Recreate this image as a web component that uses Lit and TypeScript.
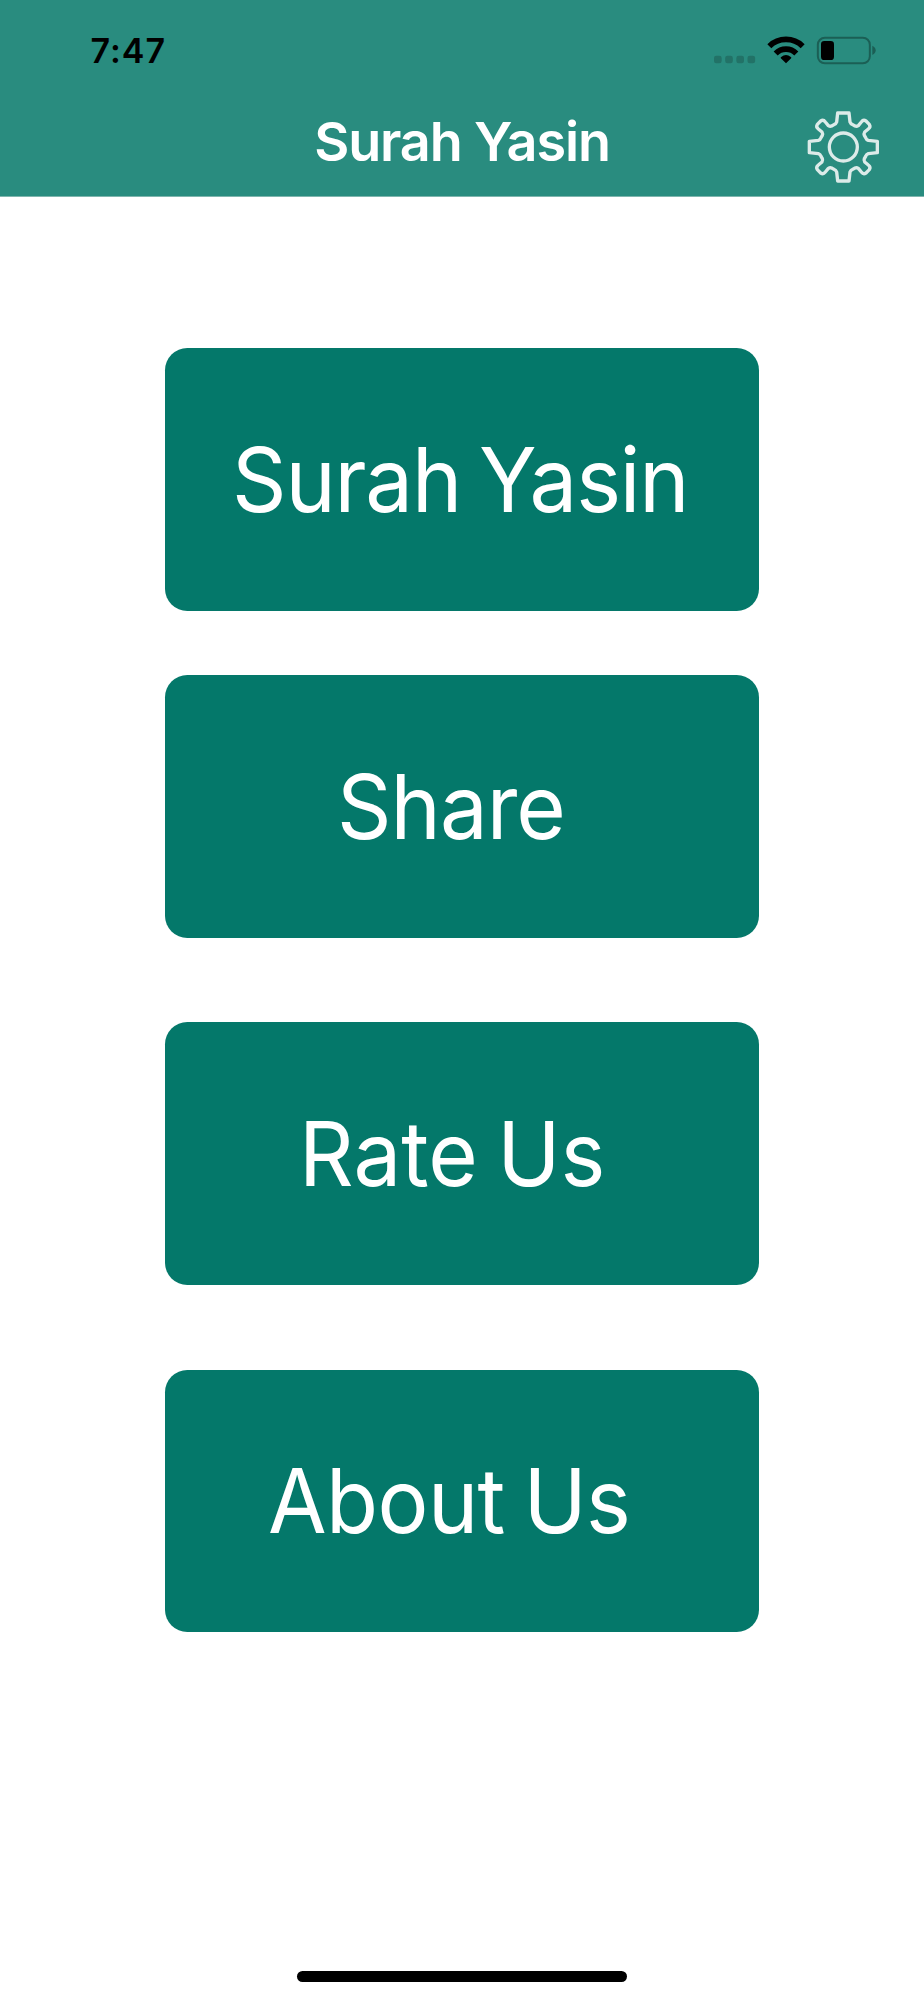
import { LitElement, html, css } from "lit";
import { customElement, property } from "lit/decorators.js";

@customElement("status-bar")
class StatusBar extends LitElement {
  static styles = css`
    :host {
      display: flex;
      justify-content: space-between;
      align-items: center;
      height: 100px;
      box-sizing: border-box;
      padding: 0 24px 0 90.500px;
    }
    .time {
      padding-top: 2px;
      font-size: 34px;
      font-weight: 580;
      line-height: 40px;
      letter-spacing: 1px;
      color: #000;
    }
    .icons {
      display: block;
      width: 200px;
      height: 60px;
    }
  `;

  render() {
    return html`
      <span class="time">7:47</span>
      <svg class="icons" viewBox="0 0 600 180">
        <g fill="#227267">
          <rect x="42" y="107" width="23" height="23" rx="7" />
          <rect x="75.5" y="107" width="23" height="23" rx="7" />
          <rect x="109" y="107" width="23" height="23" rx="7" />
          <rect x="142.5" y="107" width="23" height="23" rx="7" />
        </g>
        <g fill="none" stroke="#000">
          <path d="M208 78.5A71.5 71.5 0 0 1 308 78.5" stroke-width="17" />
          <path d="M227 100.5A43.5 43.5 0 0 1 289 100.5" stroke-width="17" />
        </g>
        <path d="M258 130L242.500 114.500Q241 112 243.500 110.700A24 24 0 0 1 272.500 110.700Q275 112 273.500 114.500Z" fill="#000" />
        <rect x="353.500" y="53" width="156" height="77" rx="21" fill="none" stroke="#1b5f55" stroke-width="6" />
        <path d="M517 77Q527 82 527 91Q527 100 517 105Z" fill="#1b5f55" />
        <rect x="363" y="63" width="39" height="57" rx="10" fill="#000" />
      </svg>
    `;
  }
}

@customElement("nav-bar")
class NavBar extends LitElement {
  static styles = css`
    :host {
      display: grid;
      grid-template-columns: 124px 1fr 124px;
      height: 96px;
    }
    .heading {
      grid-column: 2;
    }
    .title {
      margin: 0;
      padding-top: 9px;
      text-align: center;
      font-size: 54px;
      font-weight: 560;
      line-height: 65px;
      letter-spacing: -1.15px;
      color: #fff;
    }
    .settings {
      grid-column: 3;
      justify-self: end;
      width: 74px;
      height: 74px;
      margin: 10px 44px 0 0;
      padding: 0;
      border: 0;
      background: none;
    }
    .gear {
      display: block;
      width: 74px;
      height: 74px;
    }
  `;

  render() {
    // One tooth-and-valley quarter, turned about the centre four times.
    const points = [0, 90, 180, 270]
      .map((a) => {
        const c = Math.round(Math.cos((a * Math.PI) / 180));
        const s = Math.round(Math.sin((a * Math.PI) / 180));
        const p = (x: number, y: number) => `${x * c - y * s} ${x * s + y * c}`;
        return `${a === 0 ? "M" : "L"}${p(-17, -102)}L${p(17, -102)}L${p(20, -75)}Q${p(22, -69)} ${p(28, -67)}L${p(35, -63)}Q${p(40, -61)} ${p(45, -64)}L${p(54, -75)}Q${p(60, -83)} ${p(68, -78)}L${p(78, -68)}Q${p(83, -60)} ${p(75, -54)}L${p(64, -45)}Q${p(61, -40)} ${p(63, -35)}L${p(67, -28)}Q${p(69, -22)} ${p(75, -20)}L${p(102, -17)}`;
      })
      .join("");
    return html`
      <div class="heading"><h1 class="title">Surah Yasin</h1></div>
      <button class="settings" aria-label="Settings">
        <svg class="gear" viewBox="-112 -111 222 222" fill="none" stroke="#dcebe9" stroke-width="10" stroke-linejoin="round">
          <path d="${points}Z" />
          <circle r="42" />
        </svg>
      </button>
    `;
  }
}

@customElement("menu-card")
class MenuCard extends LitElement {
  @property() label = "";
  @property({ type: Number }) inset = 0;
  @property({ type: Number }) tracking = 0;

  static styles = css`
    :host {
      display: block;
    }
    .card {
      display: flex;
      align-items: center;
      width: 593.700px;
      height: 262.300px;
      box-sizing: border-box;
      padding: 0;
      border: 0;
      border-radius: 22.300px;
      background: #04786a;
      color: #fff;
      font: 430 89px/107px "Inter", sans-serif;
      word-spacing: -5px;
      text-align: left;
      white-space: nowrap;
    }
    .label {
      display: block;
      transform: scaleX(0.955);
      transform-origin: left center;
    }
  `;

  render() {
    return html`<button class="card" style="padding-left:${this.inset}px;letter-spacing:${this.tracking}px">
      <span class="label">${this.label}</span>
    </button>`;
  }
}

@customElement("app-root")
class AppRoot extends LitElement {
  static styles = css`
    :host {
      display: flex;
      flex-direction: column;
      align-items: center;
      width: 924px;
      height: 2000px;
      box-sizing: border-box;
      padding-bottom: 18px;
      background: #fff;
      font-family: "Inter", sans-serif;
    }
    .header {
      align-self: stretch;
      height: 196px;
      border-bottom: 1px solid #7fb5ae;
      background: #298c7f;
    }
    .menu {
      display: flex;
      flex-direction: column;
      padding-top: 151.400px;
    }
    .second {
      margin-top: 64.700px;
    }
    .spaced {
      margin-top: 84.800px;
    }
    .home {
      width: 330px;
      height: 11px;
      margin-top: auto;
      border-radius: 6px;
      background: #000;
    }
  `;

  render() {
    return html`
      <header class="header">
        <status-bar></status-bar>
        <nav-bar></nav-bar>
      </header>
      <main class="menu">
        <menu-card label="Surah Yasin" inset="66.7" tracking="-1.2"></menu-card>
        <menu-card class="second" label="Share" inset="172.2" tracking="-1"></menu-card>
        <menu-card class="spaced" label="Rate Us" inset="133.4" tracking="0.1"></menu-card>
        <menu-card class="spaced" label="About Us" inset="103.3" tracking="-0.6"></menu-card>
      </main>
      <div class="home"></div>
    `;
  }
}
